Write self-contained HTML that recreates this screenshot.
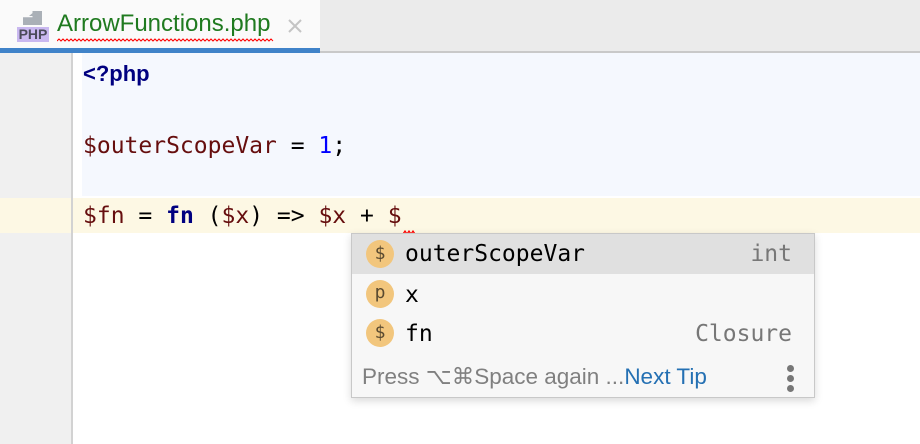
<!DOCTYPE html>
<html><head><meta charset="utf-8"><style>
*{margin:0;padding:0;box-sizing:border-box}
body{width:920px;height:444px;overflow:hidden;background:#fff;position:relative;font-family:"Liberation Sans",sans-serif}
.abs{position:absolute}
.mono{font-family:"DejaVu Sans Mono","Liberation Mono",monospace;font-size:23px;white-space:pre}
</style></head><body>
<div class="abs" style="left:0;top:0;width:920px;height:51px;background:#ebebeb"></div>
<div class="abs" style="left:0;top:51px;width:920px;height:2px;background:#c9c9c9"></div>
<div class="abs" style="left:0;top:0;width:320px;height:48px;background:#fafafa"></div>
<div class="abs" style="left:0;top:48px;width:320px;height:5px;background:#4083c9"></div>
<!-- php icon -->
<div class="abs" style="left:23px;top:11px;width:19px;height:14px;background:#aab0b7;clip-path:polygon(0 100%,100% 100%,100% 0,50% 0,50% 45%,0 45%)"></div>
<div class="abs" style="left:29px;top:11px;width:6px;height:5px;background:#aab0b7;clip-path:polygon(100% 0,100% 100%,0 100%)"></div>
<div class="abs" style="left:17px;top:27px;width:32px;height:15px;background:#c9b8f0;color:#4a4a5a;font-weight:bold;font-size:14px;line-height:15px;text-align:center">PHP</div>
<div class="abs" style="left:57px;top:10px;font-size:24px;color:#1f7a1f;line-height:28px;white-space:nowrap">ArrowFunctions.php</div>
<svg class="abs" style="left:57px;top:38px" width="218" height="5"><path d="M0 3 L2 1 L4 3 L6 1 L8 3 L10 1 L12 3 L14 1 L16 3 L18 1 L20 3 L22 1 L24 3 L26 1 L28 3 L30 1 L32 3 L34 1 L36 3 L38 1 L40 3 L42 1 L44 3 L46 1 L48 3 L50 1 L52 3 L54 1 L56 3 L58 1 L60 3 L62 1 L64 3 L66 1 L68 3 L70 1 L72 3 L74 1 L76 3 L78 1 L80 3 L82 1 L84 3 L86 1 L88 3 L90 1 L92 3 L94 1 L96 3 L98 1 L100 3 L102 1 L104 3 L106 1 L108 3 L110 1 L112 3 L114 1 L116 3 L118 1 L120 3 L122 1 L124 3 L126 1 L128 3 L130 1 L132 3 L134 1 L136 3 L138 1 L140 3 L142 1 L144 3 L146 1 L148 3 L150 1 L152 3 L154 1 L156 3 L158 1 L160 3 L162 1 L164 3 L166 1 L168 3 L170 1 L172 3 L174 1 L176 3 L178 1 L180 3 L182 1 L184 3 L186 1 L188 3 L190 1 L192 3 L194 1 L196 3 L198 1 L200 3 L202 1 L204 3 L206 1 L208 3 L210 1 L212 3 L214 1 L216 3" fill="none" stroke="#f00" stroke-width="1"/></svg>
<svg class="abs" style="left:288px;top:19px" width="14" height="14"><path d="M1 1L13 13M13 1L1 13" stroke="#c4c4c4" stroke-width="2"/></svg>
<!-- editor -->
<div class="abs" style="left:0;top:53px;width:71px;height:391px;background:#f0f0f0"></div>
<div class="abs" style="left:71px;top:53px;width:2px;height:391px;background:#d2d2d2"></div>
<div class="abs" style="left:82px;top:53px;width:838px;height:143px;background:#f5f8fe"></div>
<div class="abs" style="left:0;top:198px;width:71px;height:35px;background:#fdf8e4"></div>
<div class="abs" style="left:73px;top:198px;width:847px;height:35px;background:#fdf8e4"></div>
<div class="abs" style="left:83px;top:60px;font-weight:bold;font-size:22px;color:#000080;line-height:28px">&lt;?php</div>
<div class="abs mono" style="left:83px;top:131px;line-height:30px;color:#000"><span style="color:#660e0e">$outerScopeVar</span> = <span style="color:#0000ff">1</span>;</div>
<div class="abs mono" style="left:83px;top:201px;line-height:30px;color:#000"><span style="color:#660e0e">$fn</span> = <b style="color:#000080">fn</b> (<span style="color:#660e0e">$x</span>) =&gt; <span style="color:#660e0e">$x</span> + <span style="color:#660e0e">$</span></div>
<svg class="abs" style="left:403px;top:230px" width="12" height="5"><path d="M0 4L2 1L4 4L6 1L8 4L10 1L12 4" fill="none" stroke="#f00" stroke-width="1.2"/></svg>
<!-- popup -->
<div class="abs" style="left:351px;top:233px;width:464px;height:165px;background:#f7f7f7;border:1px solid #c8c8c8;box-shadow:0 3px 8px rgba(0,0,0,.15)">
 <div class="abs" style="left:0;top:0;width:462px;height:40px;background:#e0e0e0"></div>
 <div class="abs mono" style="left:53px;top:5px;line-height:30px;color:#000">outerScopeVar</div>
 <div class="abs mono" style="right:22px;top:5px;line-height:30px;color:#777">int</div>
 <div class="abs mono" style="left:53px;top:46px;line-height:30px;color:#000">x</div>
 <div class="abs mono" style="left:53px;top:85px;line-height:30px;color:#000">fn</div>
 <div class="abs mono" style="right:22px;top:85px;line-height:30px;color:#777">Closure</div>
 <div class="abs" style="left:10px;top:129px;font-size:22.5px;line-height:28px;color:#808080;white-space:pre">Press ⌥⌘Space again ...<span style="color:#2470b3">Next Tip</span></div>
 <div class="abs" style="left:435px;top:131px;width:7px;height:7px;border-radius:4px;background:#777"></div>
 <div class="abs" style="left:435px;top:141px;width:7px;height:7px;border-radius:4px;background:#777"></div>
 <div class="abs" style="left:435px;top:151px;width:7px;height:7px;border-radius:4px;background:#777"></div>
</div>
<div class="abs" style="left:366px;top:240px;width:28px;height:28px;border-radius:50%;background:#f2c67d;color:#5a4a30;font-family:'DejaVu Sans Mono',monospace;font-size:18px;line-height:28px;text-align:center">$</div>
<div class="abs" style="left:366px;top:280px;width:28px;height:28px;border-radius:50%;background:#f2c67d;color:#5a4a30;font-family:'DejaVu Sans Mono',monospace;font-size:18px;line-height:26px;text-align:center">p</div>
<div class="abs" style="left:366px;top:319px;width:28px;height:28px;border-radius:50%;background:#f2c67d;color:#5a4a30;font-family:'DejaVu Sans Mono',monospace;font-size:18px;line-height:28px;text-align:center">$</div>
</body></html>
